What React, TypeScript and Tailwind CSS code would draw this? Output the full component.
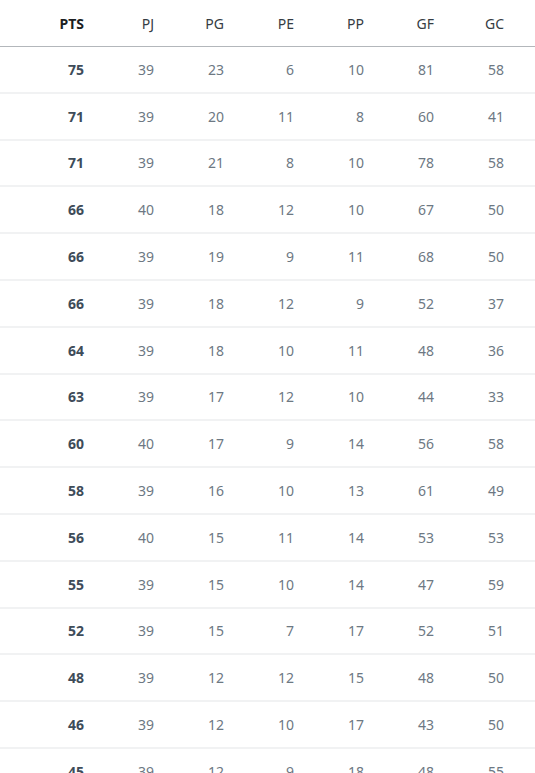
const rows: number[][] = [
  [75, 39, 23, 6, 10, 81, 58],
  [71, 39, 20, 11, 8, 60, 41],
  [71, 39, 21, 8, 10, 78, 58],
  [66, 40, 18, 12, 10, 67, 50],
  [66, 39, 19, 9, 11, 68, 50],
  [66, 39, 18, 12, 9, 52, 37],
  [64, 39, 18, 10, 11, 48, 36],
  [63, 39, 17, 12, 10, 44, 33],
  [60, 40, 17, 9, 14, 56, 58],
  [58, 39, 16, 10, 13, 61, 49],
  [56, 40, 15, 11, 14, 53, 53],
  [55, 39, 15, 10, 14, 47, 59],
  [52, 39, 15, 7, 17, 52, 51],
  [48, 39, 12, 12, 15, 48, 50],
  [46, 39, 12, 10, 17, 43, 50],
  [45, 39, 12, 9, 18, 48, 55],
];

const headers = ["PTS", "PJ", "PG", "PE", "PP", "GF", "GC"];

export default function App() {
  return (
    <div
      className="h-[773px] w-[535px] overflow-hidden bg-white text-[14px]"
      style={{ fontFamily: '"Noto Sans", "Open Sans", sans-serif' }}
    >
      <div className="grid h-[47px] grid-cols-[100px_repeat(6,70px)] items-center border-b-[1.5px] border-[#b3b7bb]">
        {headers.map((h, i) => (
          <div
            key={h}
            className={`pr-4 text-right ${
              i === 0 ? "font-bold text-[#1c1f22]" : "font-normal text-[#353c43]"
            }`}
          >
            {h}
          </div>
        ))}
      </div>
      {rows.map((r, ri) => (
        <div
          key={ri}
          className="grid h-[46.8px] grid-cols-[100px_repeat(6,70px)] items-center border-b-2 border-[#f1f2f3]"
        >
          {r.map((v, i) => (
            <div
              key={i}
              className={`pr-4 text-right ${
                i === 0 ? "font-bold text-[#3e4c59]" : "font-normal text-[#6d7883]"
              }`}
            >
              {v}
            </div>
          ))}
        </div>
      ))}
    </div>
  );
}
